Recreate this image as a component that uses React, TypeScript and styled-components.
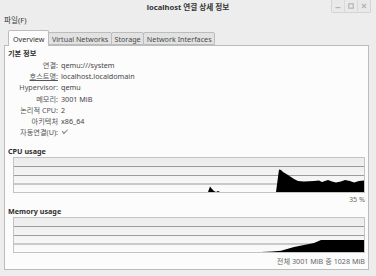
import React from 'react';
import styled, {createGlobalStyle} from "styled-components";

const GlobalStyle = createGlobalStyle`
  body {
    margin: 0;
    background: #ededed;
  }
`

const tabs = ["Overview", "Virtual Networks", "Storage", "Network Interfaces"]

const info = [
    {label: "연결:", value: "qemu:///system"},
    {label: "호스트명:", value: "localhost.localdomain", mnemonic: true},
    {label: "Hypervisor:", value: "qemu"},
    {label: "메모리:", value: "3001 MiB"},
    {label: "논리적 CPU:", value: "2"},
    {label: "아키텍처", value: "x86_64"},
]

// graph points: x 0..350, y 0..34 (bottom = 34)
const cpuPoints = "0,34 194,34 196,28.5 198,31 200,33 202,34 204,33 206,34 262,34 265,11.5 267,12 269,14 274,17 280,21 284,23 290,23.5 300,23 305,22.5 308,24 314,22 318,23.5 322,24.5 327,23.5 331,22 336,23 340,24.5 345,23 350,22.5 350,34"
const memPoints = "247,34 258,33.5 267,32.7 280,29 300,25 307,22 350,22 350,34"

const Graph = ({points}: { points: string }) => (
    <GraphBox>
        <svg width="350" height="34" viewBox="0 0 350 34">
            <defs>
                <linearGradient id="bandBg" x1="0" y1="0" x2="0" y2="1">
                    <stop offset="0" stopColor="#ececec"/>
                    <stop offset="1" stopColor="#fbfbfb"/>
                </linearGradient>
            </defs>
            <rect x="0" y="0" width="350" height="34" fill="url(#bandBg)"/>
            {[8.5, 17.5, 26].map((y) => (
                <line key={y} x1="0" x2="350" y1={y} y2={y} stroke="#9b9b9b" strokeWidth="1"/>
            ))}
            <polygon points={points} fill="#000"/>
        </svg>
    </GraphBox>
)

export default function App() {
    return (
        <>
            <GlobalStyle/>
            <Window>
                <TitleBar>
                    <span/>
                    <Title>localhost 연결 상세 정보</Title>
                    <WindowButtons>
                        <WinButton>
                            <svg width="6" height="6" viewBox="0 0 6 6"><rect x="0.5" y="4" width="5" height="1.2" fill="#b4b4b4"/></svg>
                        </WinButton>
                        <WinButton>
                            <svg width="6" height="6" viewBox="0 0 6 6"><rect x="0.8" y="0.8" width="4.4" height="4.4" fill="none" stroke="#b4b4b4" strokeWidth="1.2"/></svg>
                        </WinButton>
                        <WinButton>
                            <svg width="6" height="6" viewBox="0 0 6 6"><path d="M1 1 L5 5 M5 1 L1 5" stroke="#b4b4b4" strokeWidth="1.2"/></svg>
                        </WinButton>
                    </WindowButtons>
                </TitleBar>
                <MenuBar>
                    <MenuItem>파일(F)</MenuItem>
                </MenuBar>
                <Notebook>
                    <TabRow>
                        {tabs.map((t, i) => (
                            <Tab key={t} active={i === 0}>{t}</Tab>
                        ))}
                    </TabRow>
                    <Panel>
                        <Heading>기본 정보</Heading>
                        <InfoGrid>
                            {info.map((row) => (
                                <React.Fragment key={row.label}>
                                    <Label mnemonic={row.mnemonic}>{row.label}</Label>
                                    <Value>{row.value}</Value>
                                </React.Fragment>
                            ))}
                            <Label>자동연결(U):</Label>
                            <Value>
                                <svg width="8" height="7" viewBox="0 0 8 7">
                                    <path d="M0.8 2.2 L2.8 5.6 L7.2 0.8 L6.4 0.6 L2.9 3.6 L1.8 1.8 Z" fill="#8a8a8a"/>
                                </svg>
                            </Value>
                        </InfoGrid>
                        <Heading top={9}>CPU usage</Heading>
                        <Graph points={cpuPoints}/>
                        <Caption>35 %</Caption>
                        <Heading top={3}>Memory usage</Heading>
                        <Graph points={memPoints}/>
                        <Caption top={4}>전체 3001 MiB 중 1028 MiB</Caption>
                    </Panel>
                </Notebook>
            </Window>
        </>
    );
}

const Window = styled.div`
  width: 376px;
  height: 276px;
  box-sizing: border-box;
  display: flex;
  flex-direction: column;
  background: #ededed;
  font-family: "Noto Sans", "Noto Sans CJK KR", sans-serif;
  font-size: 7.2px;
  color: #3c3c3c;
  overflow: hidden;
`

const TitleBar = styled.div`
  height: 14px;
  display: grid;
  grid-template-columns: 1fr auto 1fr;
  align-items: start;
`

const Title = styled.span`
  font-weight: 700;
  font-size: 7.6px;
  line-height: 14px;
  color: #333;
`

const WindowButtons = styled.div`
  justify-self: end;
  margin-right: 5px;
  display: flex;
  border: 1px solid #d4d4d4;
  border-top: none;
  border-radius: 0 0 2px 2px;
  background: #e9e9e9;
`

const WinButton = styled.div`
  width: 12px;
  height: 12px;
  display: flex;
  align-items: center;
  justify-content: center;
  & + & {
    border-left: 1px solid #dadada;
  }
`

const MenuBar = styled.div`
  height: 13px;
  display: flex;
  align-items: center;
  padding-left: 4px;
`

const MenuItem = styled.span`
  color: #3a3a3a;
  font-size: 7.6px;
`

const Notebook = styled.div`
  margin: 5px 7px 6px 4px;
  flex: 1;
  display: flex;
  flex-direction: column;
`

const TabRow = styled.div`
  display: flex;
  align-items: flex-end;
  padding-left: 4px;
  height: 15px;
  position: relative;
  z-index: 1;
`

const Tab = styled.div<{ active?: boolean }>`
  box-sizing: border-box;
  height: ${({active}) => active ? 16 : 13}px;
  margin-bottom: ${({active}) => active ? -1 : 0}px;
  padding: 0 ${({active}) => active ? 4 : 2.6}px;
  display: flex;
  align-items: center;
  border: 1px solid #bcbcbc;
  border-bottom: ${({active}) => active ? "none" : "1px solid #bcbcbc"};
  border-radius: 2px 2px 0 0;
  background: ${({active}) => active ? "#fcfcfc" : "#e2e2e2"};
  color: ${({active}) => active ? "#333" : "#4a4a4a"};
  & + & {
    margin-left: ${({active}) => active ? 0 : -1}px;
  }
`

const Panel = styled.div`
  flex: 1;
  border: 1px solid #bcbcbc;
  background: #fcfcfc;
  padding: 3px;
  display: flex;
  flex-direction: column;
`

const Heading = styled.div<{ top?: number }>`
  font-weight: 700;
  line-height: 9px;
  margin-top: ${({top}) => top ?? 0}px;
  color: #2e2e2e;
`

const InfoGrid = styled.div`
  margin-top: 1px;
  display: grid;
  grid-template-columns: 50px auto;
  grid-auto-rows: 11.3px;
  column-gap: 3px;
  align-items: center;
`

const Label = styled.span<{ mnemonic?: boolean }>`
  text-align: right;
  white-space: nowrap;
  color: #555;
  text-decoration: ${({mnemonic}) => mnemonic ? "underline" : "none"};
`

const Value = styled.span`
  color: #444;
  display: flex;
  align-items: center;
  white-space: nowrap;
`

const GraphBox = styled.div`
  margin: 1px 0 0 5px;
  border: 1px solid #c4c4c4;
  height: 34px;
  display: flex;
  svg {
    display: block;
  }
`

const Caption = styled.div<{ top?: number }>`
  margin-top: ${({top}) => top ?? 2}px;
  text-align: right;
  line-height: 9px;
  color: #666;
`
